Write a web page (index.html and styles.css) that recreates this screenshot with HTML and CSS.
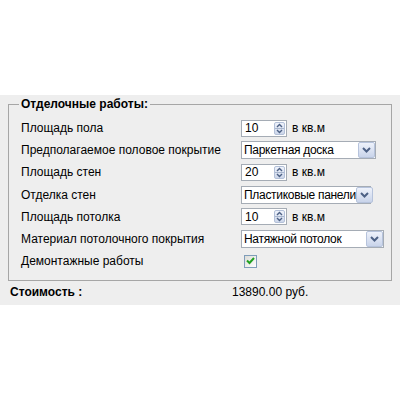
FILE: index.html
```html
<!DOCTYPE html>
<html>
<head>
<meta charset="utf-8">
<link rel="stylesheet" href="styles.css">
</head>
<body>
<div class="top"></div>
<div class="panel">
  <fieldset class="box">
    <legend class="legend">Отделочные работы:</legend>
    <div class="grid">
      <div class="lbl">Площадь пола</div>
      <div class="ctl">
        <div class="num"><span class="val">10</span><span class="spin"><svg width="11" height="13" viewBox="0 0 11 13"><path d="M3 5 L5.5 2.5 L8 5" fill="none" stroke="#4d6185" stroke-width="1.4"/><path d="M3 8 L5.5 10.5 L8 8" fill="none" stroke="#4d6185" stroke-width="1.4"/><line x1="1" y1="6.5" x2="10" y2="6.5" stroke="#a9b7cf"/></svg></span></div>
        <span class="unit">в кв.м</span>
      </div>

      <div class="lbl">Предполагаемое половое покрытие</div>
      <div class="ctl">
        <div class="sel w1"><span class="opt">Паркетная доска</span><span class="btn"><svg width="9" height="6" viewBox="0 0 9 6"><path d="M1 1 L4.5 4.5 L8 1" fill="none" stroke="#4d6185" stroke-width="2"/></svg></span></div>
      </div>

      <div class="lbl">Площадь стен</div>
      <div class="ctl">
        <div class="num"><span class="val">20</span><span class="spin"><svg width="11" height="13" viewBox="0 0 11 13"><path d="M3 5 L5.5 2.5 L8 5" fill="none" stroke="#4d6185" stroke-width="1.4"/><path d="M3 8 L5.5 10.5 L8 8" fill="none" stroke="#4d6185" stroke-width="1.4"/><line x1="1" y1="6.5" x2="10" y2="6.5" stroke="#a9b7cf"/></svg></span></div>
        <span class="unit">в кв.м</span>
      </div>

      <div class="lbl">Отделка стен</div>
      <div class="ctl">
        <div class="sel w2"><span class="opt">Пластиковые панели</span><span class="btn"><svg width="9" height="6" viewBox="0 0 9 6"><path d="M1 1 L4.5 4.5 L8 1" fill="none" stroke="#4d6185" stroke-width="2"/></svg></span></div>
      </div>

      <div class="lbl">Площадь потолка</div>
      <div class="ctl">
        <div class="num"><span class="val">10</span><span class="spin"><svg width="11" height="13" viewBox="0 0 11 13"><path d="M3 5 L5.5 2.5 L8 5" fill="none" stroke="#4d6185" stroke-width="1.4"/><path d="M3 8 L5.5 10.5 L8 8" fill="none" stroke="#4d6185" stroke-width="1.4"/><line x1="1" y1="6.5" x2="10" y2="6.5" stroke="#a9b7cf"/></svg></span></div>
        <span class="unit">в кв.м</span>
      </div>

      <div class="lbl">Материал потолочного покрытия</div>
      <div class="ctl">
        <div class="sel w3"><span class="opt">Натяжной потолок</span><span class="btn"><svg width="9" height="6" viewBox="0 0 9 6"><path d="M1 1 L4.5 4.5 L8 1" fill="none" stroke="#4d6185" stroke-width="2"/></svg></span></div>
      </div>

      <div class="lbl">Демонтажные работы</div>
      <div class="ctl">
        <span class="chk"><svg width="9" height="8" viewBox="0 0 9 8"><path d="M1 3.5 L3.5 6 L8 1" fill="none" stroke="#21a121" stroke-width="2"/></svg></span>
      </div>
    </div>
  </fieldset>
  <div class="total">
    <span class="tlbl">Стоимость :</span>
    <span class="tval">13890.00 руб.</span>
  </div>
</div>
</body>
</html>
```
FILE: styles.css
```css
html, body {
  margin: 0;
  padding: 0;
  background: #fff;
  font-family: "Liberation Sans", Arial, sans-serif;
  font-size: 12px;
  color: #000;
}
.top {
  height: 95px;
}
.panel {
  background: #eeeeee;
  height: 210px;
  padding-top: 2px;
  box-sizing: border-box;
}
.box {
  margin: 0 8px;
  padding: 6px 12px 8px 12px;
  border: 1px solid #a6a6a6;
  min-width: 0;
}
.legend {
  font-weight: bold;
  padding: 0 2px;
  margin-left: -2px;
  font-size: 12px;
}
.grid {
  display: grid;
  grid-template-columns: 220px 1fr;
  grid-auto-rows: 22.2px;
  align-items: center;
}
.lbl {
  white-space: nowrap;
}
.ctl {
  display: flex;
  align-items: center;
}
.num {
  width: 46px;
  height: 17px;
  box-sizing: border-box;
  border: 1px solid #a5acb5;
  background: #fff;
  display: flex;
  align-items: center;
  justify-content: space-between;
  padding: 0 1px 0 3px;
}
.spin {
  width: 11px;
  height: 13px;
  box-sizing: border-box;
  background: linear-gradient(#eef2fb, #cdd7ea);
  border: 1px solid #b3c0d8;
  border-radius: 2px;
  display: flex;
  align-items: center;
  justify-content: center;
  overflow: hidden;
}
.spin svg {
  flex: none;
}
.unit {
  margin-left: 5px;
}
.sel {
  height: 18px;
  box-sizing: border-box;
  border: 1px solid #a5acb5;
  background: #fff;
  display: flex;
  align-items: center;
  padding-left: 2px;
}
.w1 { width: 135px; }
.w2 { width: 130px; }
.w3 { width: 143px; }
.opt {
  flex: 1;
  white-space: nowrap;
  letter-spacing: -0.3px;
}
.btn {
  width: 17px;
  height: 16px;
  box-sizing: border-box;
  background: linear-gradient(#eef2fb, #c9d4ea);
  border: 1px solid #b6c3dc;
  border-radius: 2px;
  display: flex;
  align-items: center;
  justify-content: center;
  flex: none;
}
.chk {
  margin-left: 3px;
  width: 13px;
  height: 13px;
  box-sizing: border-box;
  border: 1px solid #7f9db9;
  background: linear-gradient(135deg, #dcdcd7, #fff);
  display: flex;
  align-items: center;
  justify-content: center;
}
.total {
  display: grid;
  grid-template-columns: 220px 1fr;
  padding: 4px 0 0 10px;
}
.tlbl {
  font-weight: bold;
}
.tval {
  padding-left: 2px;
}
```
